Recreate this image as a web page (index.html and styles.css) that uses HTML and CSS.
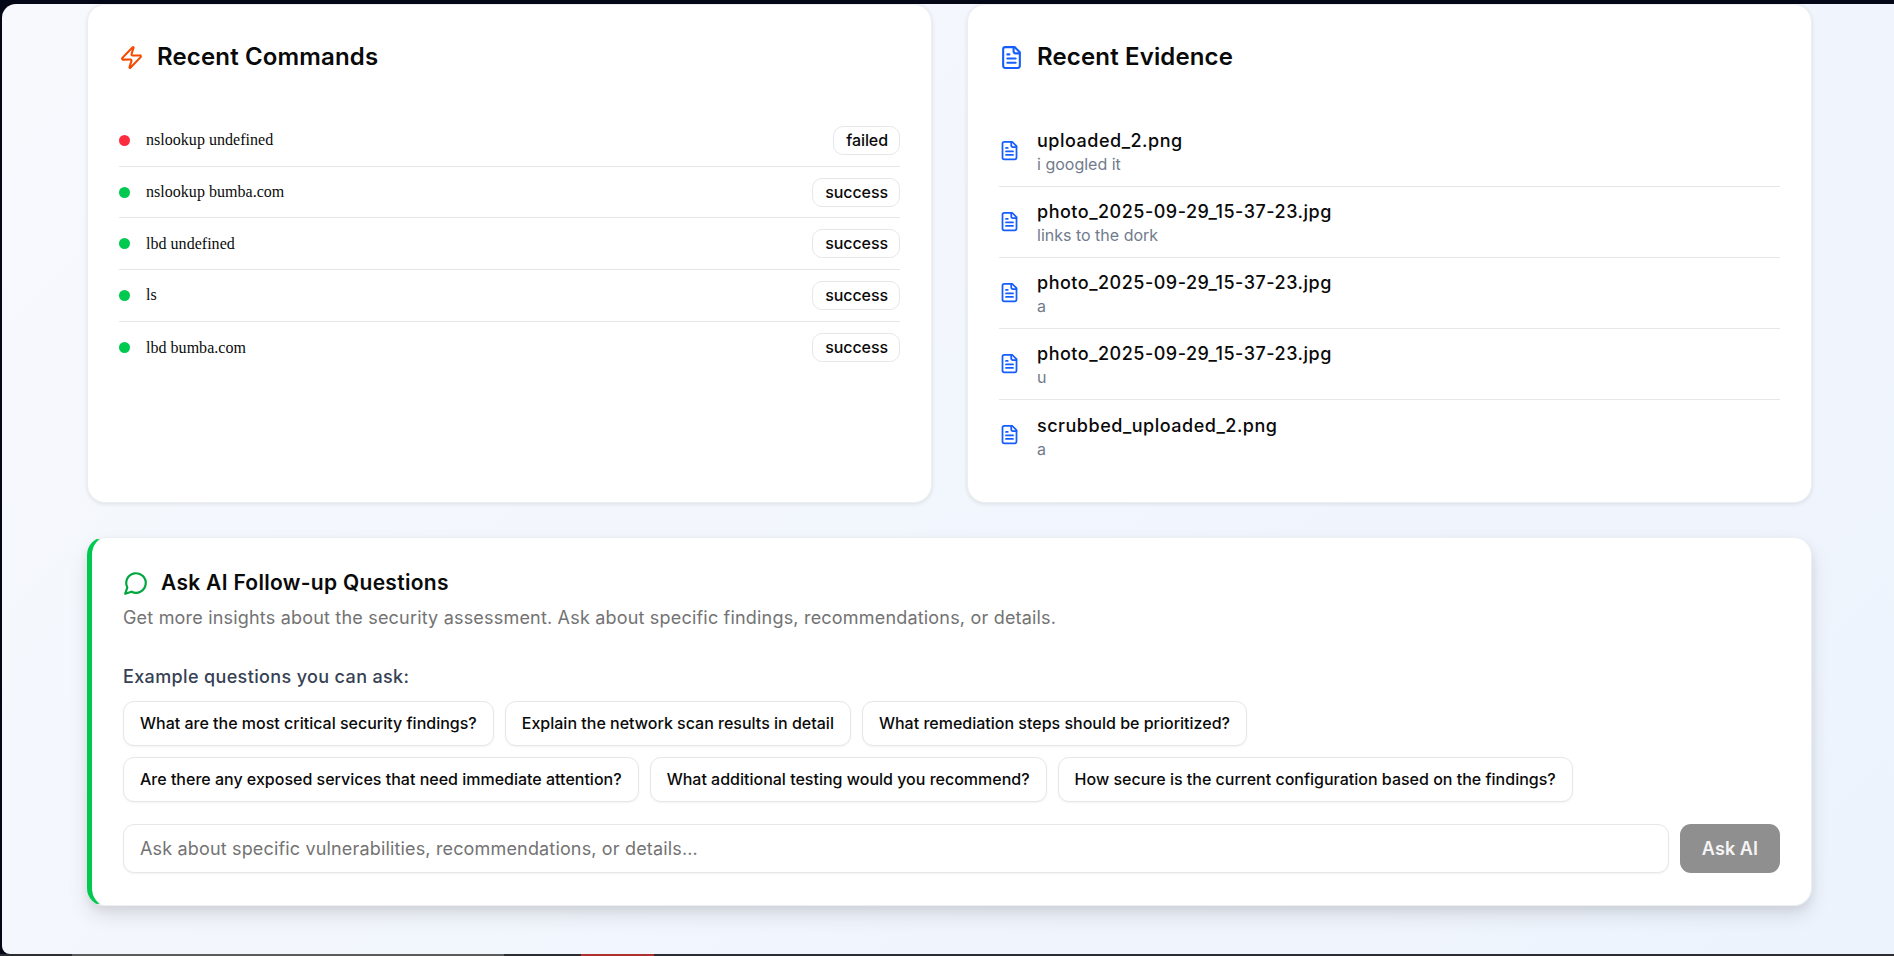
FILE: index.html
```html
<!DOCTYPE html>
<html lang="en">
<head>
    <meta charset="UTF-8">
    <meta name="viewport" content="width=device-width, initial-scale=1.0">
    <title>Assessment Report</title>
    <link rel="stylesheet" href="styles.css">
</head>
<body>
    <div class="shell">
        <main class="page">
            <div class="two-col">
                <section class="card">
                    <h2 class="card-title">
                        <svg class="title-icon orange" viewBox="0 0 24 24"><path d="M4 14a1 1 0 0 1-.78-1.63l9.9-10.2a.5.5 0 0 1 .86.46l-1.92 6.02A1 1 0 0 0 13 10h7a1 1 0 0 1 .78 1.63l-9.9 10.2a.5.5 0 0 1-.86-.46l1.92-6.02A1 1 0 0 0 11 14z"/></svg>
                        Recent Commands
                    </h2>
                    <ul class="list">
                        <li class="cmd"><span class="dot red"></span><span class="cmd-text">nslookup undefined</span><span class="badge">failed</span></li>
                        <li class="cmd"><span class="dot green"></span><span class="cmd-text">nslookup bumba.com</span><span class="badge">success</span></li>
                        <li class="cmd"><span class="dot green"></span><span class="cmd-text">lbd undefined</span><span class="badge">success</span></li>
                        <li class="cmd"><span class="dot green"></span><span class="cmd-text">ls</span><span class="badge">success</span></li>
                        <li class="cmd"><span class="dot green"></span><span class="cmd-text">lbd bumba.com</span><span class="badge">success</span></li>
                    </ul>
                </section>
                <section class="card">
                    <h2 class="card-title">
                        <svg class="title-icon blue" viewBox="0 0 24 24"><path d="M15 2H6a2 2 0 0 0-2 2v16a2 2 0 0 0 2 2h12a2 2 0 0 0 2-2V7z"/><path d="M14 2v4a2 2 0 0 0 2 2h4"/><path d="M10 9H8"/><path d="M16 13H8"/><path d="M16 17H8"/></svg>
                        Recent Evidence
                    </h2>
                    <ul class="list files">
                        <li class="file">
                            <svg class="file-icon blue" viewBox="0 0 24 24"><path d="M15 2H6a2 2 0 0 0-2 2v16a2 2 0 0 0 2 2h12a2 2 0 0 0 2-2V7z"/><path d="M14 2v4a2 2 0 0 0 2 2h4"/><path d="M10 9H8"/><path d="M16 13H8"/><path d="M16 17H8"/></svg>
                            <div><div class="file-name">uploaded_2.png</div><div class="file-note">i googled it</div></div>
                        </li>
                        <li class="file">
                            <svg class="file-icon blue" viewBox="0 0 24 24"><path d="M15 2H6a2 2 0 0 0-2 2v16a2 2 0 0 0 2 2h12a2 2 0 0 0 2-2V7z"/><path d="M14 2v4a2 2 0 0 0 2 2h4"/><path d="M10 9H8"/><path d="M16 13H8"/><path d="M16 17H8"/></svg>
                            <div><div class="file-name">photo_2025-09-29_15-37-23.jpg</div><div class="file-note">links to the dork</div></div>
                        </li>
                        <li class="file">
                            <svg class="file-icon blue" viewBox="0 0 24 24"><path d="M15 2H6a2 2 0 0 0-2 2v16a2 2 0 0 0 2 2h12a2 2 0 0 0 2-2V7z"/><path d="M14 2v4a2 2 0 0 0 2 2h4"/><path d="M10 9H8"/><path d="M16 13H8"/><path d="M16 17H8"/></svg>
                            <div><div class="file-name">photo_2025-09-29_15-37-23.jpg</div><div class="file-note">a</div></div>
                        </li>
                        <li class="file">
                            <svg class="file-icon blue" viewBox="0 0 24 24"><path d="M15 2H6a2 2 0 0 0-2 2v16a2 2 0 0 0 2 2h12a2 2 0 0 0 2-2V7z"/><path d="M14 2v4a2 2 0 0 0 2 2h4"/><path d="M10 9H8"/><path d="M16 13H8"/><path d="M16 17H8"/></svg>
                            <div><div class="file-name">photo_2025-09-29_15-37-23.jpg</div><div class="file-note">u</div></div>
                        </li>
                        <li class="file">
                            <svg class="file-icon blue" viewBox="0 0 24 24"><path d="M15 2H6a2 2 0 0 0-2 2v16a2 2 0 0 0 2 2h12a2 2 0 0 0 2-2V7z"/><path d="M14 2v4a2 2 0 0 0 2 2h4"/><path d="M10 9H8"/><path d="M16 13H8"/><path d="M16 17H8"/></svg>
                            <div><div class="file-name">scrubbed_uploaded_2.png</div><div class="file-note">a</div></div>
                        </li>
                    </ul>
                </section>
            </div>
            <section class="ask">
                <h2 class="ask-title">
                    <svg class="ask-icon green-stroke" viewBox="0 0 24 24"><path d="M7.9 20A9 9 0 1 0 4 16.1L2 22Z"/></svg>
                    Ask AI Follow-up Questions
                </h2>
                <p class="ask-desc">Get more insights about the security assessment. Ask about specific findings, recommendations, or details.</p>
                <p class="ask-label">Example questions you can ask:</p>
                <div class="chips">
                    <button class="chip">What are the most critical security findings?</button>
                    <button class="chip">Explain the network scan results in detail</button>
                    <button class="chip">What remediation steps should be prioritized?</button>
                </div>
                <div class="chips">
                    <button class="chip">Are there any exposed services that need immediate attention?</button>
                    <button class="chip">What additional testing would you recommend?</button>
                    <button class="chip">How secure is the current configuration based on the findings?</button>
                </div>
                <div class="ask-form">
                    <input class="ask-input" type="text" placeholder="Ask about specific vulnerabilities, recommendations, or details...">
                    <button class="ask-btn">Ask AI</button>
                </div>
            </section>
        </main>
    </div>
    <div class="taskbar">
        <span class="seg seg-a"></span>
        <span class="seg seg-b"></span>
        <span class="seg seg-c"></span>
        <span class="seg seg-d"></span>
    </div>
</body>
</html>
```

FILE: styles.css
```css
*{
    box-sizing: border-box;
}
body{
    height: 100vh;
    margin: 0px;
    padding: 4px 0px 0px 2px;
    display: flex;
    flex-direction: column;
    overflow: hidden;
    background: #040816;
    font-family: "Inter", "Liberation Sans", sans-serif;
    color: #0a0a0a;
}
.shell{
    flex: 1;
    min-height: 0;
    border-radius: 14px 0px 0px 8px;
    background: linear-gradient(135deg, #f7f9fd, #edf3fd);
}
.page{
    padding: 0px 82px 0px 85px;
}
.two-col{
    display: grid;
    grid-template-columns: 1fr 1fr;
    gap: 35px;
}
.card{
    height: 499px;
    padding: 38px 31px 0px;
    background: #fff;
    border: 1px solid #eceef1;
    border-radius: 18px;
    box-shadow: 0px 1px 4px rgba(0,0,0,0.1);
}
.card-title{
    display: flex;
    align-items: center;
    gap: 13px;
    height: 28px;
    margin: 0px;
    font-size: 24px;
    font-weight: 600;
    line-height: 28px;
    letter-spacing: 0.15px;
}
.title-icon{
    width: 25px;
    height: 25px;
    fill: none;
    stroke-width: 2;
    stroke-linecap: round;
    stroke-linejoin: round;
}
.orange{
    stroke: #f54900;
}
.blue{
    stroke: #155dfc;
}
.list{
    list-style: none;
    margin: 44px 0px 0px;
    padding: 0px;
}
.files{
    margin-top: 45px;
}
.cmd{
    display: flex;
    align-items: center;
    height: 51.7px;
    border-bottom: 1px solid #e6e7ea;
}
.cmd:last-child,
.file:last-child{
    border-bottom: none;
}
.dot{
    width: 11px;
    height: 11px;
    margin-right: 16px;
    border-radius: 50%;
}
.dot.red{
    background: #fb2c3f;
}
.dot.green{
    background: #00c950;
}
.cmd-text{
    flex: 1;
    font-family: "Liberation Serif", serif;
    font-size: 16px;
    letter-spacing: 0.03px;
}
.badge{
    height: 29px;
    padding: 0px 11px 0px 12px;
    border: 1px solid #e6e7ea;
    border-radius: 10px;
    font-size: 16px;
    font-weight: 500;
    line-height: 27px;
    letter-spacing: -0.08px;
}
.file{
    display: flex;
    align-items: center;
    gap: 17px;
    height: 71px;
    padding-top: 2px;
    border-bottom: 1px solid #e6e7ea;
}
.file-icon{
    width: 21px;
    height: 21px;
    margin-bottom: 4px;
    fill: none;
    stroke-width: 2;
    stroke-linecap: round;
    stroke-linejoin: round;
}
.file-name{
    font-size: 18px;
    font-weight: 500;
    line-height: 24px;
    letter-spacing: 0.5px;
}
.file-note{
    font-size: 16px;
    line-height: 22px;
    color: #717b8c;
}
.ask{
    height: 369px;
    margin-top: 34px;
    padding: 30px 31px 0px 31px;
    background: #fff;
    border: 1px solid #eceef1;
    border-left: 5px solid #00c950;
    border-radius: 18px;
    box-shadow: 0px 10px 20px rgba(0,0,0,0.1), 0px 4px 8px rgba(0,0,0,0.06);
}
.ask-title{
    display: flex;
    align-items: center;
    gap: 12px;
    margin: 0px;
    font-size: 21px;
    font-weight: 600;
    line-height: 30px;
    letter-spacing: 0.3px;
}
.ask-icon{
    width: 26px;
    height: 26px;
    fill: none;
    stroke-width: 2;
    stroke-linecap: round;
    stroke-linejoin: round;
}
.green-stroke{
    stroke: #00a63e;
}
.ask-desc{
    margin: 8px 0px 0px;
    font-size: 18px;
    line-height: 24px;
    letter-spacing: 0.19px;
    color: #737373;
}
.ask-label{
    margin: 35px 0px 0px;
    font-size: 18px;
    font-weight: 500;
    line-height: 24px;
    letter-spacing: 0.36px;
    color: #364153;
}
.chips{
    display: flex;
    gap: 11px;
    margin-top: 11px;
}
.ask-label + .chips{
    margin-top: 12px;
}
.chip{
    height: 45px;
    padding: 0px 16px 2px;
    background: #fff;
    border: 1px solid #e6e7ea;
    border-radius: 11px;
    font-family: inherit;
    font-size: 16px;
    font-weight: 500;
    color: #0a0a0a;
    box-shadow: 0px 1px 2px rgba(0,0,0,0.05);
}
.ask-form{
    display: flex;
    gap: 11px;
    margin-top: 22px;
}
.ask-input{
    flex: 1;
    height: 49px;
    padding: 0px 16px;
    border: 1px solid #e6e7ea;
    border-radius: 11px;
    font-family: inherit;
    font-size: 18px;
    letter-spacing: 0.16px;
    box-shadow: 0px 1px 2px rgba(0,0,0,0.05);
}
.ask-input::placeholder{
    color: #737373;
}
.ask-btn{
    width: 100px;
    height: 49px;
    background: #8f8f8f;
    border: none;
    border-radius: 11px;
    font-family: inherit;
    font-size: 18px;
    font-weight: 600;
    letter-spacing: 0.1px;
    color: #f5f5f5;
}
.taskbar{
    display: flex;
    flex: none;
    height: 2px;
    margin-left: -2px;
    background: #2b2d33;
}
.seg-a{
    width: 72px;
}
.seg-b{
    width: 432px;
    background: #5c5c5c;
}
.seg-c{
    width: 77px;
}
.seg-d{
    width: 73px;
    background: #b03030;
}
```
